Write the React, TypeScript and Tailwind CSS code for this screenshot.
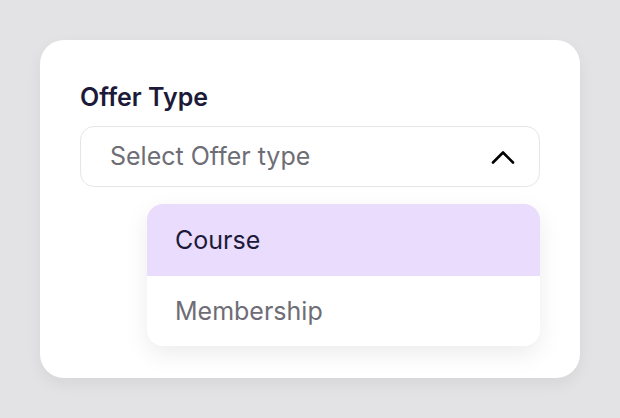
export default function App() {
  return (
    <div className="min-h-screen bg-[#e3e3e5] p-10" style={{ fontFamily: '"Inter", "Noto Sans", sans-serif' }}>
      {/* Card */}
      <div className="h-[338px] rounded-[24px] bg-white px-10 pt-[43px] shadow-[0_6px_16px_rgba(0,0,0,0.06)]">
        <div className="text-[25px] font-semibold leading-[29px] text-[#1c1a38]">Offer Type</div>

        {/* Select */}
        <div className="mt-[14px] flex h-[61px] items-center justify-between rounded-[14px] border border-[#e6e6e8] pl-[29px] pr-[24px]">
          <span className="text-[25px] leading-none text-[#6e6d76]">Select Offer type</span>
          <svg width="24" height="14" viewBox="0 0 24 14" fill="none" stroke="#000" strokeWidth="2.6" strokeLinecap="round" strokeLinejoin="round">
            <polyline points="2,12.5 12,2.5 22,12.5" />
          </svg>
        </div>

        {/* Menu */}
        <div className="ml-[67px] mt-[17px] overflow-hidden rounded-[16px] bg-white shadow-[0_8px_24px_rgba(0,0,0,0.08)]">
          <div className="flex h-[72px] items-center bg-[#e9dcfd] px-7 text-[25px] leading-none text-[#1c1a38]">Course</div>
          <div className="flex h-[70px] items-center px-7 text-[25px] leading-none text-[#6e6d76]">Membership</div>
        </div>
      </div>
    </div>
  )
}
